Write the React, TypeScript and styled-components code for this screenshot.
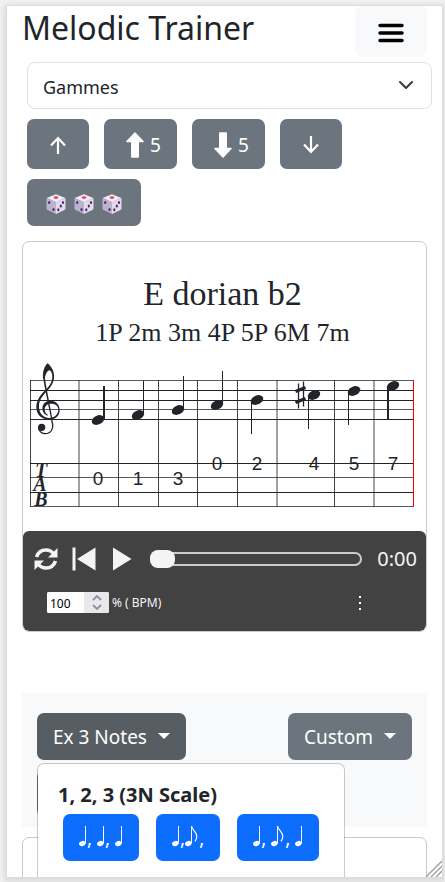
import React from "react";
import styled, { createGlobalStyle, css } from "styled-components";

const Global = createGlobalStyle`
  *, *::before, *::after { box-sizing: border-box; }
  body {
    margin: 0;
    background: #f2f2f2;
    color: #212529;
    font-family: "Noto Sans", "Open Sans", sans-serif;
    font-size: 18px;
    line-height: 30px;
  }
  button, input, select { font: inherit; color: inherit; margin: 0; }
  h1, h2, h3, p { margin: 0; font-weight: 400; }
`;

const Viewport = styled.div`
  height: 100vh;
  padding: 5px 2px 4px 6px;
  overflow: hidden;
`;

const Frame = styled.div`
  position: relative;
  height: 100%;
  overflow: hidden;
  background: #fff;
  border: 1px solid #dcdcdc;
  box-shadow: 0 2px 6px 2px rgba(0, 0, 0, 0.1);
`;

const Page = styled.main`
  padding: 0 15px;
`;

const Header = styled.header`
  display: flex;
  justify-content: space-between;
  align-items: flex-start;
`;

const Title = styled.h1`
  font-size: 32px;
  line-height: 44px;
`;

const MenuButton = styled.button`
  display: flex;
  align-items: center;
  justify-content: center;
  width: 72px;
  height: 51px;
  padding: 3px 0 0;
  border: 0;
  border-radius: 8px;
  background: #f8f9fa;
`;

const SelectWrap = styled.div`
  position: relative;
  margin: 5px -5px 10px 5px;

  svg {
    position: absolute;
    right: 18px;
    top: 17px;
    pointer-events: none;
  }
`;

const Select = styled.select`
  display: block;
  width: 100%;
  height: 47px;
  padding: 3px 40px 0 15px;
  appearance: none;
  background: #fff;
  border: 1px solid #dee2e6;
  border-radius: 8px;
`;

const Tools = styled.div`
  display: flex;
  flex-wrap: wrap;
  gap: 10px 15px;
  margin-left: 5px;
`;

const Button = styled.button<{ $tone?: "active" | "primary" }>`
  display: inline-flex;
  align-items: center;
  justify-content: center;
  gap: 6px;
  height: 47px;
  padding: 0 16px;
  border: 0;
  border-radius: 7px;
  white-space: nowrap;
  font-size: 19px;
  color: #fff;
  background: #6c757d;
  ${(p) => p.$tone === "active" && css`background: #565e64;`}
  ${(p) => p.$tone === "primary" && css`background: #0d6efd;`}
`;

const ArrowButton = styled(Button)<{ $wide?: boolean }>`
  width: ${(p) => (p.$wide ? 73 : 62)}px;
  height: 50px;
  padding: ${(p) => (p.$wide ? "2px 0 0 6px" : "2px 0 0")};
`;

const DiceButton = styled(Button)`
  gap: 8px;
  padding: 2px 19px 0;
`;

const Card = styled.section`
  margin-top: 15px;
  overflow: hidden;
  border: 1px solid #c9cbcd;
  border-radius: 7px;
  background: #fff;
`;

const ScaleName = styled.h2`
  margin-top: 32px;
  padding-right: 4px;
  text-align: center;
  font: 34px/40px "Liberation Serif", serif;
`;

const Intervals = styled.p`
  padding-right: 4px;
  text-align: center;
  font: 26px/38px "Liberation Serif", serif;
`;

const Score = styled.svg`
  display: block;
  width: 100%;
  color: #212529;
`;

const Player = styled.div`
  padding: 12px 9px 18px 10px;
  border-radius: 6px;
  background: #424242;
  color: #f4f4f4;
`;

const Transport = styled.div`
  display: flex;
  align-items: center;
  height: 32px;
`;

const IconButton = styled.button<{ $width: number }>`
  display: flex;
  align-items: center;
  justify-content: center;
  width: ${(p) => p.$width}px;
  height: 32px;
  padding: 0;
  border: 0;
  background: none;
  color: #f4f4f4;
`;

const Progress = styled.input`
  flex: 1;
  min-width: 0;
  height: 14px;
  margin: 0 15px 0 14px;
  appearance: none;
  border: 2px solid #ccc;
  border-radius: 7px;
  background: transparent;

  &::-webkit-slider-thumb {
    appearance: none;
    width: 25px;
    height: 18px;
    margin-left: -2px;
    border-radius: 8px;
    background: #f4f4f4;
  }
`;

const Clock = styled.span`
  font-size: 20px;
`;

const TempoRow = styled.div`
  display: flex;
  align-items: center;
  height: 21px;
  margin-top: 17px;
  padding: 0 52px 0 14px;
  font-size: 12px;
  line-height: 20px;
`;

const Tempo = styled.label`
  display: flex;
  align-items: center;
  gap: 3px;
`;

const Spin = styled.span`
  display: flex;
  width: 62px;
  height: 21px;
  overflow: hidden;
  border-radius: 2px;
  background: #fff;
`;

const TempoInput = styled.input`
  width: 37px;
  padding: 2px 0 0 3px;
  border: 0;
  color: #000;
  appearance: textfield;

  &::-webkit-inner-spin-button { appearance: none; display: none; }
`;

const Stepper = styled.span`
  display: flex;
  flex: 1;
  align-items: center;
  justify-content: center;
  background: #e9e9ed;
`;

const MoreButton = styled.button`
  display: flex;
  justify-content: center;
  width: 10px;
  margin-left: auto;
  padding: 0;
  border: 0;
  background: none;
`;

const Exercises = styled.section`
  display: flex;
  justify-content: space-between;
  align-items: flex-start;
  margin-top: 61px;
  padding: 20px 15px 10px;
  background: #f8f9fa;
`;

const Column = styled.div`
  position: relative;
  display: flex;
  flex-direction: column;
  gap: 10px;
`;

const Caret = styled.span`
  margin: 0 0 1px 5px;
  border: 6px solid transparent;
  border-top-color: currentColor;
  border-bottom: 0;
`;

const Menu = styled.div`
  position: absolute;
  z-index: 2;
  top: 50px;
  left: 0;
  width: 308px;
  height: 320px;
  padding: 16px 20px;
  border: 1px solid rgba(0, 0, 0, 0.2);
  border-radius: 7px;
  background: #fff;
  background-clip: padding-box;
`;

const MenuTitle = styled.h3`
  font-size: 20px;
  font-weight: 700;
`;

const Patterns = styled.div`
  display: flex;
  gap: 17px;
  margin: 4px 5px 0;
`;

const PatternText = styled.span`
  white-space: pre;

  svg { vertical-align: -2px; }
`;

const NextCard = styled(Card)`
  margin-top: 10px;
  height: 240px;
`;

const Grip = styled.svg`
  position: absolute;
  z-index: 3;
  right: 0;
  bottom: 0;
`;

const ThinArrow = ({ down }: { down?: boolean }) => (
  <svg width="18" height="20" viewBox="0 0 18 20" fill="none" stroke="currentColor" strokeWidth="2.2">
    {down ? <path d="M9 1v16M2 9.500l7 7.500 7-7.500" /> : <path d="M9 19V3M2 10.500L9 3l7 7.500" />}
  </svg>
);

const BlockArrow = ({ down }: { down?: boolean }) => (
  <svg width="18" height="26" viewBox="0 0 18 26" fill="currentColor" stroke="currentColor" strokeWidth="1.500" strokeLinejoin="round">
    {down ? <path d="M5.800 1h6.400v15.500H17L9 25 1 16.500h4.800z" /> : <path d="M5.800 25h6.400V9.500H17L9 1 1 9.500h4.800z" />}
  </svg>
);

const Die = () => (
  <svg width="20" height="20" viewBox="0 0 20 20">
    <path d="M10 .3L19.300 4 10 8.200.7 4z" fill="#f4ecf5" />
    <path d="M.5 4L10 8.200V20L1.600 16C.8 15.500.5 15 .5 14z" fill="#bdb2cb" />
    <path d="M19.500 4L10 8.200V20l8.400-4c.8-.5 1.100-1 1.100-2z" fill="#e3daea" />
    <ellipse cx="10" cy="3.600" rx="2.300" ry="1.300" fill="#e0446a" />
    <g fill="#46297a">
      <ellipse cx="3.200" cy="8.500" rx="1.100" ry="1.500" />
      <ellipse cx="7.500" cy="15.500" rx="1.100" ry="1.500" />
      <ellipse cx="17" cy="8.500" rx="1.100" ry="1.500" />
      <ellipse cx="14.800" cy="12" rx="1.100" ry="1.500" />
      <ellipse cx="12.300" cy="15.800" rx="1.100" ry="1.500" />
    </g>
  </svg>
);

const Quarter = () => (
  <svg width="8" height="21" viewBox="0 0 8 21" role="img" aria-label="quarter note">
    <ellipse cx="3.300" cy="17.600" rx="3.300" ry="2.600" transform="rotate(-18 3.300 17.600)" fill="currentColor" />
    <path d="M6.500 0v17.500" stroke="currentColor" strokeWidth="1" />
  </svg>
);

const Eighth = () => (
  <svg width="14" height="21" viewBox="0 0 14 21" role="img" aria-label="eighth note">
    <ellipse cx="3.300" cy="17.600" rx="3.300" ry="2.600" transform="rotate(-18 3.300 17.600)" fill="currentColor" />
    <path d="M6.500 0v17.500" stroke="currentColor" strokeWidth="1" />
    <path d="M6.500 0C7 4 11.800 6 11.800 10.500c0 2-.8 3.500-1.800 5" fill="none" stroke="currentColor" strokeWidth="1.200" />
  </svg>
);

type Note = { x: number; y: number; stem: number; end: number; w: number; fret: string; line: number };

const notes: Note[] = [
  { x: 98, y: 420, stem: 104, end: 386, w: 2, fret: "0", line: 478 },
  { x: 138, y: 415, stem: 143.5, end: 381, w: 1, fret: "1", line: 478 },
  { x: 178, y: 410, stem: 183.5, end: 376, w: 1, fret: "3", line: 478 },
  { x: 217, y: 405, stem: 222.5, end: 371, w: 1, fret: "0", line: 463 },
  { x: 257, y: 400, stem: 251.5, end: 434, w: 1, fret: "2", line: 463 },
  { x: 314, y: 395, stem: 308.5, end: 429, w: 1, fret: "4", line: 463 },
  { x: 354, y: 391, stem: 348.5, end: 425, w: 1, fret: "5", line: 463 },
  { x: 393, y: 386, stem: 388, end: 420, w: 2, fret: "7", line: 463 },
];

const Staff = () => (
  <Score viewBox="23 352 403 179" role="img" aria-label="E dorian b2 scale with tablature">
    <g stroke="#212529" strokeWidth="1">
      {[380.5, 390.5, 400.5, 409.5, 419.5, 463.5, 477.5, 492.5, 506.5].map((y) => (
        <path key={y} d={`M30 ${y}H414`} opacity={[380.5, 409.5, 477.5, 506.5].includes(y) ? 0.75 : 1} />
      ))}
      {[30.5, 79, 118.5, 158.5, 197.5, 237.5, 277, 334.5, 374].map((x) => (
        <path key={x} d={`M${x} 380V507`} opacity="0.85" />
      ))}
      <path d="M413.500 380V507" stroke="#f00" />
    </g>
    <g transform="translate(15 355) scale(.3333)" fill="currentColor">
      <path d="M98 25C112 36 119 54 117 70C114 92 100 104 88 117C76 130 71 142 72 157C73 176 86 189 103 189C119 189 130 179 130 163C130 152 120 146 108 146C96 146 89 154 89 163C89 171 93 177 99 180L97 182C88 179 82 171 82 160C82 146 93 137 107 137C123 137 134 149 134 165C134 183 121 194 102 194C80 194 64 179 64 157C64 138 73 124 86 110C98 98 111 88 112 66C112 54 108 47 103 46C95 49 89 62 90 76L84 70C83 50 87 35 98 25Z" />
      <path d="M84 62L90 70C92 90 113 190 115 208C116 226 107 238 91 238C79 238 69 230 69 217L73 217C75 230 82 234 91 234C104 234 112 225 111 209C108 180 88 100 84 62Z" />
      <circle cx="80" cy="217" r="11" />
    </g>
    <g fill="currentColor" fontFamily="Liberation Serif, serif" fontWeight="700" fontStyle="italic" fontSize="20" textAnchor="middle">
      <text x="41" y="477">T</text>
      <text x="40" y="491">A</text>
      <text x="41" y="506">B</text>
    </g>
    {notes.map((n) => (
      <g key={n.x} fill="currentColor">
        <ellipse cx={n.x} cy={n.y} rx="6.500" ry="4.500" transform={`rotate(-24 ${n.x} ${n.y})`} />
        <path d={`M${n.stem} ${n.y}V${n.end}`} stroke="currentColor" strokeWidth={n.w} />
        <text x={n.x} y={n.line + 7} fontFamily="Liberation Sans, sans-serif" fontSize="19" textAnchor="middle">{n.fret}</text>
      </g>
    ))}
    <path d="M298.500 383.500v25M303.500 381.500v25" stroke="currentColor" strokeWidth="1.300" />
    <path d="M295.500 391.500l10-4M295.500 402.500l10-4" stroke="currentColor" strokeWidth="3" />
  </Score>
);

export default function App() {
  return (
    <>
      <Global />
      <Viewport>
        <Frame>
          <Page>
            <Header>
              <Title>Melodic Trainer</Title>
              <MenuButton aria-label="Menu">
                <svg width="28" height="22" viewBox="0 0 28 22" stroke="#000" strokeWidth="3.500" strokeLinecap="round">
                  <path d="M3 3.500h22M3 11h22M3 18.500h22" />
                </svg>
              </MenuButton>
            </Header>

            <SelectWrap>
              <Select aria-label="Exercise type" defaultValue="Gammes">
                <option>Gammes</option>
              </Select>
              <svg width="16" height="12" viewBox="0 0 16 12" fill="none" stroke="#343a40" strokeWidth="2" strokeLinecap="round" strokeLinejoin="round">
                <path d="M2 3l6 6 6-6" />
              </svg>
            </SelectWrap>

            <Tools>
              <ArrowButton aria-label="Up"><ThinArrow /></ArrowButton>
              <ArrowButton $wide aria-label="Up a fifth"><BlockArrow />5</ArrowButton>
              <ArrowButton $wide aria-label="Down a fifth"><BlockArrow down />5</ArrowButton>
              <ArrowButton aria-label="Down"><ThinArrow down /></ArrowButton>
              <DiceButton aria-label="Random"><Die /><Die /><Die /></DiceButton>
            </Tools>

            <Card>
              <ScaleName>E dorian b2</ScaleName>
              <Intervals>1P 2m 3m 4P 5P 6M 7m</Intervals>
              <Staff />
              <Player>
                <Transport>
                  <IconButton $width={26} aria-label="Loop">
                    <svg width="24" height="24" viewBox="0 0 24 24">
                      <g fill="none" stroke="currentColor" strokeWidth="3.600">
                        <path d="M2.500 10C4 5.500 7.500 3 12 3c3.500 0 6 1.500 8 4" />
                        <path d="M21.500 14c-1.500 4.500-5 7-9.500 7-3.500 0-6-1.500-8-4" />
                      </g>
                      <path d="M23.500 1v9.500H14zM.5 23v-9.500H10z" fill="currentColor" />
                    </svg>
                  </IconButton>
                  <IconButton $width={49} aria-label="Restart">
                    <svg width="24" height="24" viewBox="0 0 24 24" fill="currentColor">
                      <path d="M.5.500h3v23h-3zM23.500.500v23L5 12z" />
                    </svg>
                  </IconButton>
                  <IconButton $width={28} aria-label="Play">
                    <svg width="20" height="24" viewBox="0 0 20 24" fill="currentColor">
                      <path d="M1 .500v23L19.500 12z" />
                    </svg>
                  </IconButton>
                  <Progress type="range" min={0} max={100} defaultValue={0} aria-label="Position" />
                  <Clock>0:00</Clock>
                </Transport>
                <TempoRow>
                  <Tempo>
                    <Spin>
                      <TempoInput type="number" defaultValue={100} />
                      <Stepper>
                        <svg width="12" height="17" viewBox="0 0 12 17" fill="none" stroke="#8f8f9d" strokeWidth="1.800">
                          <path d="M2 6l4-4 4 4M2 11l4 4 4-4" />
                        </svg>
                      </Stepper>
                    </Spin>
                    % ( BPM)
                  </Tempo>
                  <MoreButton aria-label="More">
                    <svg width="4" height="16" viewBox="0 0 4 16" fill="#fff">
                      <path d="M1 1h2v2H1zM1 7h2v2H1zM1 13h2v2H1z" />
                    </svg>
                  </MoreButton>
                </TempoRow>
              </Player>
            </Card>

            <Exercises>
              <Column>
                <Button $tone="active" aria-expanded="true">Ex 3 Notes <Caret /></Button>
                <Button aria-label="More exercises"><Caret /></Button>
                <Menu>
                  <MenuTitle>1, 2, 3 (3N Scale)</MenuTitle>
                  <Patterns>
                    <Button $tone="primary">
                      <PatternText><Quarter />, <Quarter />, <Quarter /></PatternText>
                    </Button>
                    <Button $tone="primary">
                      <PatternText><Quarter />,<Eighth />,</PatternText>
                    </Button>
                    <Button $tone="primary">
                      <PatternText><Quarter />, <Eighth />, <Quarter /></PatternText>
                    </Button>
                  </Patterns>
                </Menu>
              </Column>
              <Button>Custom <Caret /></Button>
            </Exercises>

            <NextCard />
          </Page>
          <Grip width="17" height="17" viewBox="0 0 17 17" stroke="#999" strokeWidth="1.300">
            <path d="M1 17L17 1M6 17L17 6M11 17l6-6" />
          </Grip>
        </Frame>
      </Viewport>
    </>
  );
}
